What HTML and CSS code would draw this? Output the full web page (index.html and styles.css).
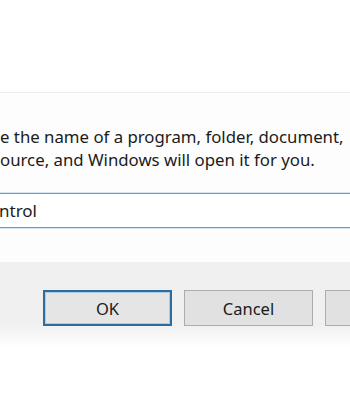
FILE: index.html
```html
<!DOCTYPE html>
<html>
<head>
<meta charset="utf-8">
<link rel="stylesheet" href="styles.css">
</head>
<body>
<div class="top"></div>
<div class="content">
  <p class="desc"><span class="line">e the name of a program, folder, document,</span><span class="line">ource, and Windows will open it for you.</span></p>
  <div class="field"><span class="value">ntrol</span></div>
</div>
<div class="footer">
  <div class="buttons">
    <button class="btn btn-default">OK</button>
    <button class="btn">Cancel</button>
    <button class="btn" aria-label="Browse"></button>
  </div>
</div>
</body>
</html>
```

FILE: styles.css
```css
html, body {
  margin: 0;
  padding: 0;
  background: #ffffff;
  overflow: hidden;
}
body {
  width: 350px;
  height: 400px;
  font-family: "Noto Sans", "Open Sans", sans-serif;
  color: #1b1b1b;
}
.top {
  height: 92px;
  border-bottom: 1px solid #efefef;
  background: #ffffff;
}
.content {
  background: #fdfdfd;
  padding-top: 32px;
  height: 137px;
}
.desc {
  margin: 0;
  font-size: 16.8px;
  line-height: 23px;
}
.line {
  display: block;
  white-space: nowrap;
}
.field {
  margin-top: 22px;
  margin-left: -4px;
  width: 400px;
  height: 33px;
  border-top: 1px solid #7a96b2;
  border-bottom: 1px solid #7a96b2;
  box-shadow: 0 -1px 0 #d4e6f3, 0 1px 0 #d4e6f3;
  background: #ffffff;
  display: flex;
  align-items: center;
  font-size: 17px;
}
.value {
  padding-left: 3px;
}
.footer {
  height: 138px;
  background: linear-gradient(#f0f0f0 0, #f0f0f0 45%, #ffffff 62%, #ffffff 100%);
}
.buttons {
  display: flex;
  gap: 12px;
  padding-left: 43px;
  padding-top: 28px;
}
.btn {
  flex: none;
  width: 129px;
  height: 36px;
  box-sizing: border-box;
  border: 1px solid #adadad;
  background: #e1e1e1;
  font-family: "Noto Sans", "Open Sans", sans-serif;
  font-size: 16.5px;
  color: #1b1b1b;
  padding: 0;
}
.btn-default {
  border: 2px solid #2f6c9e;
  box-shadow: inset 0 0 0 1px #a9cbe6;
  background: #e5e5e5;
}
```
